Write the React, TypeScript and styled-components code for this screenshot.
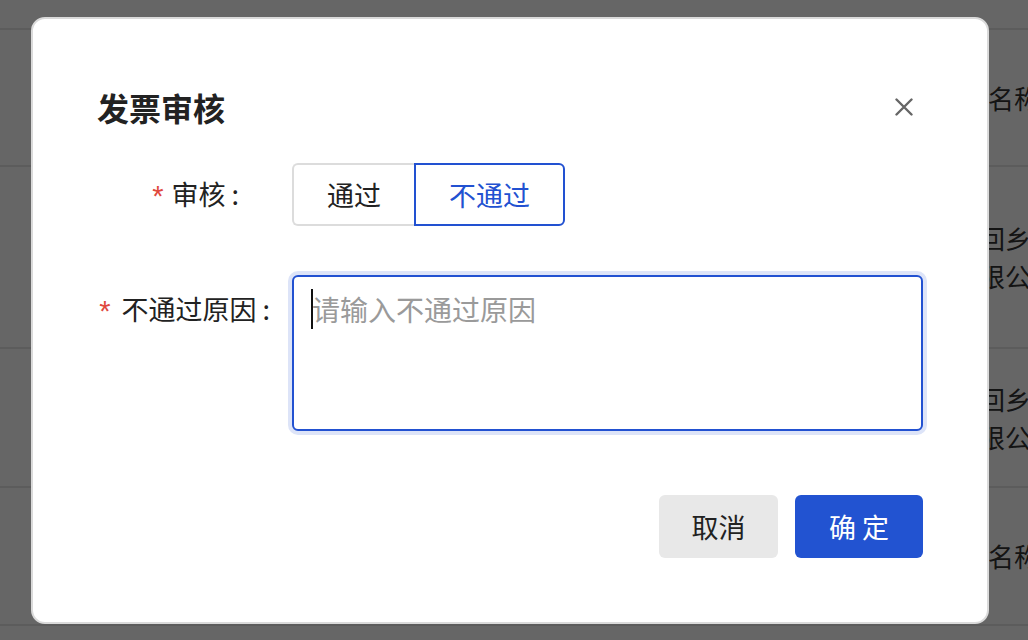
import React from "react";
import styled, { createGlobalStyle } from "styled-components";

const GlobalStyle = createGlobalStyle`
  * { box-sizing: border-box; }
  html, body {
    margin: 0;
    padding: 0;
    width: 1028px;
    height: 640px;
    overflow: hidden;
    background: #fff;
    font-family: "Noto Sans CJK SC", "Noto Sans", sans-serif;
  }
`;

const Page = styled.div`
  position: relative;
  width: 1028px;
  height: 640px;
  overflow: hidden;
  background: #fff;
`;

const Table = styled.div`
  display: flex;
  flex-direction: column;
`;

const Row = styled.div<{ $h: number }>`
  height: ${(p) => p.$h}px;
  flex: none;
  border-bottom: 2px solid #e6e6e6;
  display: flex;
  align-items: center;
`;

const Cell = styled.div<{ $indent: number }>`
  padding-left: ${(p) => p.$indent}px;
  font-size: 26px;
  line-height: 38px;
  color: #333;
  white-space: nowrap;
`;

const Overlay = styled.div`
  position: absolute;
  inset: 0;
  background: rgba(0, 0, 0, 0.6);
  display: flex;
  align-items: center;
  justify-content: center;
  padding-right: 8px;
`;

const Modal = styled.div`
  width: 958px;
  height: 607px;
  background: #fff;
  border: 2px solid #dadada;
  border-radius: 14px;
  padding: 67px 64px 64px;
  display: flex;
  flex-direction: column;
`;

const Header = styled.div`
  display: flex;
  align-items: center;
  justify-content: space-between;
  height: 42px;
`;

const Title = styled.h2`
  margin: 0;
  font-size: 32px;
  line-height: 42px;
  font-weight: 700;
  color: #222;
`;

const CloseButton = styled.button`
  border: 0;
  background: transparent;
  padding: 0;
  margin-right: 10px;
  width: 18px;
  height: 18px;
  display: flex;
  cursor: pointer;
`;

const FormRow = styled.div<{ $top: number; $align: string }>`
  display: grid;
  grid-template-columns: 195px 1fr;
  align-items: ${(p) => p.$align};
  margin-top: ${(p) => p.$top}px;
`;

const Label = styled.label<{ $pr: number; $pt?: number }>`
  display: flex;
  justify-content: flex-end;
  align-items: center;
  padding-right: ${(p) => p.$pr}px;
  padding-top: ${(p) => p.$pt ?? 0}px;
  font-size: 27px;
  line-height: 40px;
  color: #222;
  white-space: nowrap;
`;

const Star = styled.span<{ $gap: number }>`
  color: #e0483e;
  font-family: "Liberation Sans", sans-serif;
  font-size: 29px;
  line-height: 40px;
  margin-right: ${(p) => p.$gap}px;
  transform: translateY(2px);
`;

const Colon = styled.span`
  margin-left: 6px;
`;

const RadioGroup = styled.div`
  display: flex;
`;

const RadioOption = styled.button<{ $active: boolean; $first: boolean }>`
  height: 63px;
  padding: 0 33px;
  font-family: inherit;
  font-size: 27px;
  background: #fff;
  cursor: pointer;
  color: ${(p) => (p.$active ? "#2251d1" : "#222")};
  border: 2px solid ${(p) => (p.$active ? "#2251d1" : "#dcdcdc")};
  border-right-width: ${(p) => (p.$first ? 0 : 2)}px;
  border-radius: ${(p) => (p.$first ? "6px 0 0 6px" : "0 6px 6px 0")};
`;

const TextareaWrap = styled.div`
  position: relative;
  display: flex;
`;

const Textarea = styled.textarea`
  width: 100%;
  height: 156px;
  resize: none;
  outline: none;
  border: 2px solid #2251d1;
  border-radius: 6px;
  box-shadow: 0 0 0 4px #dde4f8;
  padding: 12px 18px;
  font-family: inherit;
  font-size: 28px;
  line-height: 40px;
  color: #222;
  &::placeholder {
    color: #9a9a9a;
  }
`;

const Caret = styled.span`
  position: absolute;
  left: 19px;
  top: 14px;
  width: 2px;
  height: 40px;
  background: #111;
`;

const Footer = styled.div`
  margin-top: auto;
  display: flex;
  justify-content: flex-end;
  gap: 17px;
`;

const ActionButton = styled.button<{ $primary?: boolean; $w: number }>`
  width: ${(p) => p.$w}px;
  height: 63px;
  border: 0;
  border-radius: 6px;
  font-family: inherit;
  font-size: 27px;
  cursor: pointer;
  background: ${(p) => (p.$primary ? "#2253d1" : "#e8e8e8")};
  color: ${(p) => (p.$primary ? "#fff" : "#222")};
`;

export default function App() {
  return (
    <Page>
      <GlobalStyle />
      <Table>
        <Row $h={30} />
        <Row $h={137}>
          <Cell $indent={936}>公司名称</Cell>
        </Row>
        <Row $h={182}>
          <Cell $indent={927}>
            振兴回乡村
            <br />
            展有限公司
          </Cell>
        </Row>
        <Row $h={139}>
          <Cell $indent={927}>
            振兴回乡村
            <br />
            展有限公司
          </Cell>
        </Row>
        <Row $h={138}>
          <Cell $indent={936}>公司名称</Cell>
        </Row>
      </Table>
      <Overlay>
        <Modal>
          <Header>
            <Title>发票审核</Title>
            <CloseButton aria-label="关闭">
              <svg width="18" height="18" viewBox="0 0 18 18">
                <path
                  d="M1.5 1.5 L16.5 16.5 M16.5 1.5 L1.5 16.5"
                  stroke="#666"
                  strokeWidth="2.4"
                  strokeLinecap="round"
                />
              </svg>
            </CloseButton>
          </Header>
          <FormRow $top={35} $align="center">
            <Label $pr={53}>
              <Star $gap={8}>*</Star>审核<Colon>:</Colon>
            </Label>
            <RadioGroup>
              <RadioOption $active={false} $first={true}>
                通过
              </RadioOption>
              <RadioOption $active={true} $first={false}>
                不通过
              </RadioOption>
            </RadioGroup>
          </FormRow>
          <FormRow $top={49} $align="start">
            <Label $pr={22} $pt={14}>
              <Star $gap={11}>*</Star>不通过原因<Colon>:</Colon>
            </Label>
            <TextareaWrap>
              <Textarea placeholder="请输入不通过原因" />
              <Caret />
            </TextareaWrap>
          </FormRow>
          <Footer>
            <ActionButton $w={119}>取消</ActionButton>
            <ActionButton $primary $w={128}>
              确 定
            </ActionButton>
          </Footer>
        </Modal>
      </Overlay>
    </Page>
  );
}
